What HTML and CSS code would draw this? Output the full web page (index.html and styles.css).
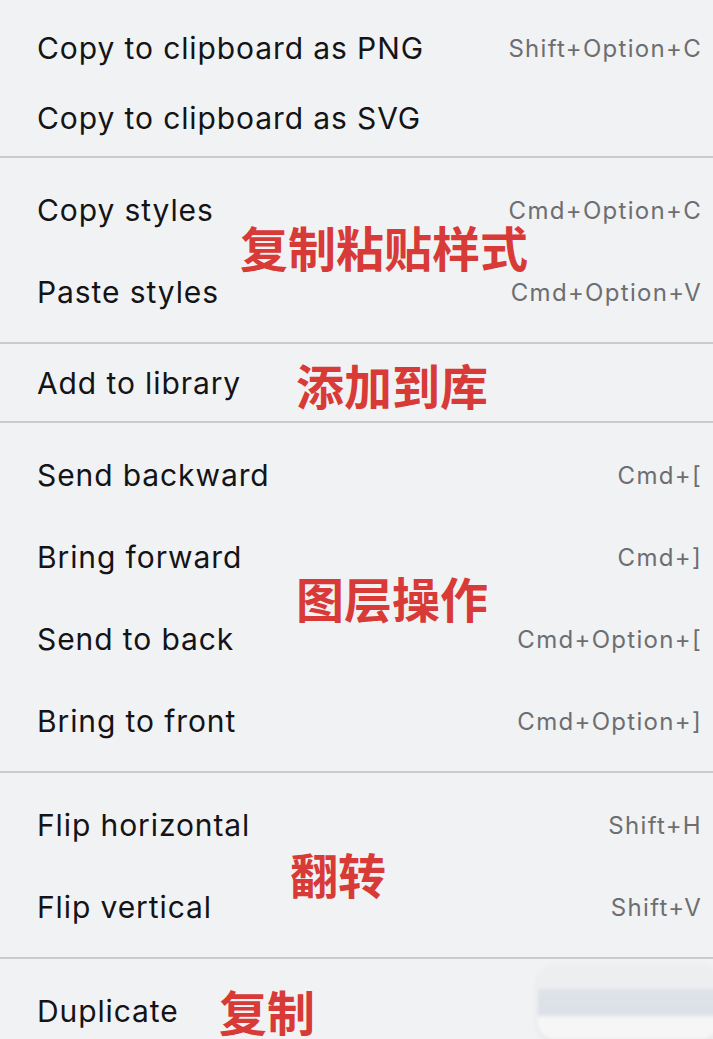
FILE: index.html
```html
<!DOCTYPE html>
<html lang="en">
<head>
<meta charset="utf-8">
<title>Context menu</title>
<link rel="stylesheet" href="styles.css">
</head>
<body>
<div class="menu">
  <div class="group group-first">
    <div class="item item-short"><span class="label">Copy to clipboard as PNG</span><span class="kbd">Shift+Option+C</span></div>
    <div class="item item-short"><span class="label">Copy to clipboard as SVG</span></div>
  </div>
  <div class="group">
    <div class="item"><span class="label">Copy styles</span><span class="kbd">Cmd+Option+C</span></div>
    <div class="item"><span class="label">Paste styles</span><span class="kbd">Cmd+Option+V</span></div>
    <span class="note note-styles">复制粘贴样式</span>
  </div>
  <div class="group group-single">
    <div class="item item-mid"><span class="label">Add to library</span></div>
    <span class="note note-library">添加到库</span>
  </div>
  <div class="group">
    <div class="item"><span class="label">Send backward</span><span class="kbd">Cmd+[</span></div>
    <div class="item"><span class="label">Bring forward</span><span class="kbd">Cmd+]</span></div>
    <div class="item"><span class="label">Send to back</span><span class="kbd">Cmd+Option+[</span></div>
    <div class="item"><span class="label">Bring to front</span><span class="kbd">Cmd+Option+]</span></div>
    <span class="note note-layer">图层操作</span>
  </div>
  <div class="group">
    <div class="item"><span class="label">Flip horizontal</span><span class="kbd">Shift+H</span></div>
    <div class="item"><span class="label">Flip vertical</span><span class="kbd">Shift+V</span></div>
    <span class="note note-flip">翻转</span>
  </div>
  <div class="group group-last">
    <div class="item item-last"><span class="label">Duplicate</span></div>
    <span class="note note-dup">复制</span>
    <div class="blur"></div>
  </div>
</div>
</body>
</html>
```
FILE: styles.css
```css
html, body {
  margin: 0;
  padding: 0;
  background: #f1f2f4;
}
body {
  width: 713px;
  font-family: Inter, "Liberation Sans", "Noto Sans CJK SC", sans-serif;
}
.menu {
  display: flex;
  flex-direction: column;
}
.group {
  position: relative;
  padding: 11px 0 9px;
  border-bottom: 2px solid #c9cbce;
}
.group-first {
  padding: 13px 0 3px;
}
.group-single {
  padding: 0;
}
.group-last {
  border-bottom: none;
  padding-bottom: 0;
}
.item {
  height: 82px;
  display: flex;
  align-items: center;
  justify-content: space-between;
  padding: 0 11px 0 37px;
}
.item-short {
  height: 70px;
}
.item-mid {
  height: 77px;
}
.item-last {
  height: 71px;
  align-items: flex-start;
  padding-top: 22px;
  box-sizing: border-box;
}
.label {
  font-size: 30px;
  line-height: 38px;
  color: #141416;
  letter-spacing: 0.9px;
}
.kbd {
  font-size: 24px;
  color: #6d6e70;
  letter-spacing: 1.3px;
}
.note {
  position: absolute;
  font-family: "Noto Sans CJK SC", sans-serif;
  font-weight: 700;
  font-size: 48px;
  line-height: 1;
  color: #d83a37;
  white-space: nowrap;
}
.note-styles { left: 240px; top: 64px; }
.note-library { left: 296px; top: 16px; }
.note-layer { left: 296px; top: 150px; }
.note-flip { left: 290px; top: 76px; }
.note-dup { left: 219px; top: 27px; }
.blur {
  position: absolute;
  left: 538px;
  top: 6px;
  width: 180px;
  height: 74px;
  border-radius: 18px;
  background: linear-gradient(180deg, #eceef0 0%, #eceef0 30%, #dfe3e8 34%, #dbe0e7 66%, #f6f6f7 72%, #f6f6f7 100%);
  box-shadow: 0 4px 8px rgba(0,0,0,0.05);
  filter: blur(1.5px);
}
```
